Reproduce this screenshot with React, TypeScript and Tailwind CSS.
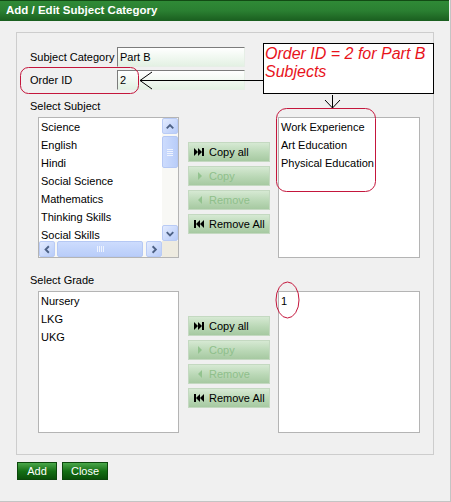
import React from "react";

type Dir = "up" | "down" | "left" | "right";

function Chevron({ dir }: { dir: Dir }) {
  const paths: Record<Dir, string> = {
    up: "M4 9.5 L7.5 6 L11 9.5",
    down: "M4 6 L7.5 9.5 L11 6",
    left: "M9.5 4 L6 7.5 L9.5 11",
    right: "M6 4 L9.5 7.5 L6 11",
  };
  return (
    <svg width="15" height="15" viewBox="0 0 15 15">
      <path d={paths[dir]} fill="none" stroke="#4d6185" strokeWidth="2" />
    </svg>
  );
}

function ScrollBtn({ dir }: { dir: Dir }) {
  return (
    <div className="w-[16px] h-[16px] shrink-0 flex items-center justify-center rounded-[2px] border border-[#b9cbf5] bg-gradient-to-br from-[#e3ebfe] to-[#b8ccf9]">
      <Chevron dir={dir} />
    </div>
  );
}

function Grip({ vertical }: { vertical: boolean }) {
  return vertical ? (
    <div className="flex flex-col gap-[1px] items-center">
      <div className="w-[6px] h-[1px] bg-[#eef3fe]" />
      <div className="w-[6px] h-[1px] bg-[#eef3fe]" />
      <div className="w-[6px] h-[1px] bg-[#eef3fe]" />
      <div className="w-[6px] h-[1px] bg-[#eef3fe]" />
    </div>
  ) : (
    <div className="flex gap-[1px] items-center">
      <div className="h-[6px] w-[1px] bg-[#eef3fe]" />
      <div className="h-[6px] w-[1px] bg-[#eef3fe]" />
      <div className="h-[6px] w-[1px] bg-[#eef3fe]" />
      <div className="h-[6px] w-[1px] bg-[#eef3fe]" />
    </div>
  );
}

function ListItems({ items }: { items: string[] }) {
  return (
    <div className="flex-1 overflow-hidden pl-[2px] text-[11px] leading-[18px] text-black">
      {items.map((i) => (
        <div key={i} className="h-[18px] whitespace-nowrap">
          {i}
        </div>
      ))}
    </div>
  );
}

function ScrollList({ items }: { items: string[] }) {
  return (
    <div className="w-[141px] h-[141px] shrink-0 border border-[#b4b4b4] bg-white flex flex-col">
      <div className="flex flex-1 min-h-0">
        <ListItems items={items} />
        <div className="w-[16px] flex flex-col bg-[#f8f8f5]">
          <ScrollBtn dir="up" />
          <div className="flex-1 pt-[2px]">
            <div className="h-[32px] rounded-[2px] border border-[#b5c8f4] bg-gradient-to-r from-[#cddcfd] to-[#b9cdf9] flex items-center justify-center">
              <Grip vertical />
            </div>
          </div>
          <ScrollBtn dir="down" />
        </div>
      </div>
      <div className="h-[16px] flex bg-[#f8f8f5]">
        <ScrollBtn dir="left" />
        <div className="flex-1 pl-[2px]">
          <div className="w-[86px] h-[16px] rounded-[2px] border border-[#b5c8f4] bg-gradient-to-b from-[#cddcfd] to-[#b9cdf9] flex items-center justify-center">
            <Grip vertical={false} />
          </div>
        </div>
        <ScrollBtn dir="right" />
        <div className="w-[16px] bg-[#eeebe0]" />
      </div>
    </div>
  );
}

function PlainList({ items, w, h }: { items: string[]; w: string; h: string }) {
  return (
    <div className={`${w} ${h} shrink-0 border border-[#b4b4b4] bg-white flex flex-col`}>
      <ListItems items={items} />
    </div>
  );
}

type IconKind = "copyall" | "copy" | "remove" | "removeall";

function BtnIcon({ kind, color }: { kind: IconKind; color: string }) {
  return (
    <svg width="11" height="8" viewBox="0 0 11 8">
      {kind === "copyall" && (
        <>
          <polygon points="0,0 4,4 0,8" fill={color} />
          <polygon points="4,0 8,4 4,8" fill={color} />
          <rect x="8" y="0" width="2" height="8" fill={color} />
        </>
      )}
      {kind === "removeall" && (
        <>
          <rect x="0" y="0" width="2" height="8" fill={color} />
          <polygon points="6,0 2,4 6,8" fill={color} />
          <polygon points="10,0 6,4 10,8" fill={color} />
        </>
      )}
      {kind === "copy" && <polygon points="4,0 8,4 4,8" fill={color} />}
      {kind === "remove" && <polygon points="8,0 4,4 8,8" fill={color} />}
    </svg>
  );
}

function MoveBtn({ label, kind, disabled }: { label: string; kind: IconKind; disabled?: boolean }) {
  const color = disabled ? "#93c38f" : "#000000";
  return (
    <div className="w-[82px] h-[20px] flex items-center pl-[5px] gap-[4px] border border-[#c4d9c1] bg-gradient-to-b from-[#d6e9d3] via-[#bcd9b8] to-[#a6c9a1]">
      <BtnIcon kind={kind} color={color} />
      <span className={`text-[11px] leading-[14px] whitespace-nowrap ${disabled ? "text-[#8fbf8b]" : "text-black"}`}>
        {label}
      </span>
    </div>
  );
}

function MoveButtons() {
  return (
    <div className="flex flex-col gap-[4px] ml-[9px]">
      <MoveBtn label="Copy all" kind="copyall" />
      <MoveBtn label="Copy" kind="copy" disabled />
      <MoveBtn label="Remove" kind="remove" disabled />
      <MoveBtn label="Remove All" kind="removeall" />
    </div>
  );
}

function TextInput({ value }: { value: string }) {
  return (
    <div className="w-[128px] h-[20px] border-t border-l border-[#7c7c7c] border-r border-b border-r-[#e6eee6] border-b-[#e6eee6] bg-gradient-to-b from-white to-[#e3f1e3] flex items-center pl-[2px] text-[11px] text-black">
      {value}
    </div>
  );
}

function GreenBtn({ label, w }: { label: string; w: string }) {
  return (
    <div className={`${w} h-[18px] flex items-center justify-center border border-[#0c470c] bg-gradient-to-b from-[#4aa84a] via-[#157015] to-[#0a500a] text-white text-[11px]`}>
      {label}
    </div>
  );
}

export default function App() {
  const subjects = ["Science", "English", "Hindi", "Social Science", "Mathematics", "Thinking Skills", "Social Skills"];
  return (
    <div className="relative w-[451px] h-[502px] bg-[#f0f0f0] border-r border-b border-[#c4c4c4] font-['Liberation_Sans',Arial,sans-serif] overflow-hidden">
      <div className="w-[449px] h-[21px] border-t border-[#124a14] bg-gradient-to-b from-[#2f8a36] via-[#2a7f31] to-[#1a5e1f] flex items-center pl-[6px] text-white font-bold text-[11.5px]">
        Add / Edit Subject Category
      </div>

      <div className="ml-[16px] mt-[11px] w-[418px] h-[423px] border border-[#cdcdcd] pl-[13px] pt-[14px]">
        <div className="flex items-center h-[20px]">
          <div className="w-[87px] text-[11px] text-black">Subject Category</div>
          <TextInput value="Part B" />
        </div>
        <div className="flex items-center h-[20px] mt-[3px]">
          <div className="w-[87px] text-[11px] text-black">Order ID</div>
          <TextInput value="2" />
        </div>

        <div className="mt-[9px] h-[14px] leading-[14px] text-[11px] text-black">Select Subject</div>
        <div className="mt-[4px] ml-[8px] flex items-center">
          <ScrollList items={subjects} />
          <MoveButtons />
          <div className="ml-[8px]">
            <PlainList items={["Work Experience", "Art Education", "Physical Education"]} w="w-[142px]" h="h-[141px]" />
          </div>
        </div>

        <div className="mt-[15px] h-[14px] leading-[14px] text-[11px] text-black">Select Grade</div>
        <div className="mt-[4px] ml-[8px] flex items-center">
          <PlainList items={["Nursery", "LKG", "UKG"]} w="w-[141px]" h="h-[142px]" />
          <MoveButtons />
          <div className="ml-[8px]">
            <PlainList items={["1"]} w="w-[142px]" h="h-[142px]" />
          </div>
        </div>
      </div>

      <div className="flex ml-[17px] mt-[7px] gap-[5px]">
        <GreenBtn label="Add" w="w-[40px]" />
        <GreenBtn label="Close" w="w-[46px]" />
      </div>

      <svg className="absolute left-0 top-0 pointer-events-none" width="451" height="502">
        <rect x="20.5" y="67.5" width="118" height="26" rx="8" fill="none" stroke="#c4163c" strokeWidth="1" />
        <line x1="140" y1="80.5" x2="263" y2="80.5" stroke="#000" strokeWidth="1" />
        <polyline points="152,72 140,80.5 152,89" fill="none" stroke="#000" strokeWidth="1" />
        <line x1="332.5" y1="95" x2="332.5" y2="108" stroke="#000" strokeWidth="1" />
        <polyline points="325,100 332.5,108 340,100" fill="none" stroke="#000" strokeWidth="1" />
        <rect x="276.5" y="108.5" width="99" height="83" rx="10" fill="none" stroke="#c4163c" strokeWidth="1" />
        <ellipse cx="287.5" cy="300" rx="11.5" ry="18" fill="none" stroke="#c4163c" strokeWidth="1" />
      </svg>

      <div className="absolute left-[263px] top-[44px] w-[171px] h-[51px] border border-black bg-white pl-[1px] text-[16px] leading-[18px] italic text-[#e8131b] -mt-[1px] pt-[1px]">
        Order ID = 2 for Part B
        <br />
        Subjects
      </div>
    </div>
  );
}
